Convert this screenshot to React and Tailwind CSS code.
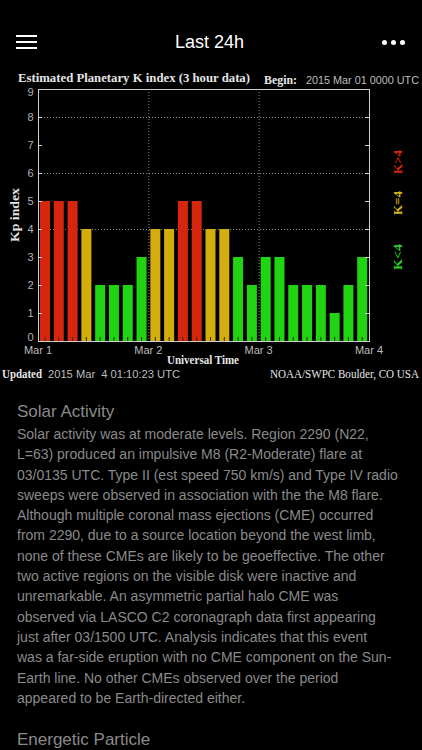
import React from 'react';

const KP = [5, 5, 5, 4, 2, 2, 2, 3, 4, 4, 5, 5, 4, 4, 3, 2, 3, 3, 2, 2, 2, 1, 2, 3];

const X0 = 38;
const X1 = 369;
const Y0 = 341; // Kp = 0
const UNIT = 28;
const SLOT = (X1 - X0) / 24;

function barColor(v) {
  if (v > 4) return '#d6260e';
  if (v === 4) return '#d4ad0d';
  return '#20d412';
}

// keep end labels inside the box, like the source plot does
function labelY(v) {
  if (v === 0) return Y0;
  if (v === 9) return Y0 - 9 * UNIT + 7;
  return Y0 - v * UNIT + 4;
}

const LINES = [
  'Solar activity was at moderate levels. Region 2290 (N22,',
  'L=63) produced an impulsive M8 (R2-Moderate) flare at',
  '03/0135 UTC. Type II (est speed 750 km/s) and Type IV radio',
  'sweeps were observed in association with the the M8 flare.',
  'Although multiple coronal mass ejections (CME) occurred',
  'from 2290, due to a source location beyond the west limb,',
  'none of these CMEs are likely to be geoeffective. The other',
  'two active regions on the visible disk were inactive and',
  'unremarkable. An asymmetric partial halo CME was',
  'observed via LASCO C2 coronagraph data first appearing',
  'just after 03/1500 UTC. Analysis indicates that this event',
  'was a far-side eruption with no CME component on the Sun-',
  'Earth line. No other CMEs observed over the period',
  'appeared to be Earth-directed either.',
];

function KpChart() {
  const serif = '"Liberation Serif", "DejaVu Serif", serif';
  const sans = '"Liberation Sans", Arial, sans-serif';
  const days = [
    { x: X0, label: 'Mar 1' },
    { x: X0 + SLOT * 8, label: 'Mar 2' },
    { x: X0 + SLOT * 16, label: 'Mar 3' },
    { x: X1, label: 'Mar 4' },
  ];

  return (
    <svg width="422" height="322" viewBox="0 64 422 322" className="block">
      {/* header */}
      <text x="18" y="82" fill="#e6e6e6" fontFamily={serif} fontWeight="bold" fontSize="12" textLength="232" lengthAdjust="spacingAndGlyphs">
        Estimated Planetary K index (3 hour data)
      </text>
      <text x="264" y="84" fill="#e6e6e6" fontFamily={serif} fontWeight="bold" fontSize="12" textLength="33" lengthAdjust="spacingAndGlyphs">
        Begin:
      </text>
      <text x="306" y="84" fill="#bdbdbd" fontFamily={sans} fontSize="11.5" textLength="113" lengthAdjust="spacingAndGlyphs">
        2015 Mar 01 0000 UTC
      </text>

      {/* dotted grid */}
      {[4, 6, 8].map((v) => (
        <line key={v} x1={X0} x2={X1} y1={Y0 - v * UNIT + 0.5} y2={Y0 - v * UNIT + 0.5} stroke="#8a8a8a" strokeWidth="1" strokeDasharray="1 2" />
      ))}
      {[days[1].x, days[2].x].map((x) => (
        <line key={x} x1={x + 0.5} x2={x + 0.5} y1={Y0 - 9 * UNIT} y2={Y0} stroke="#8a8a8a" strokeWidth="1" strokeDasharray="1 2" />
      ))}

      {/* bars */}
      {KP.map((v, i) => {
        const x = X0 + 2 + i * SLOT;
        const cx = x + 5;
        return (
          <g key={i}>
            <rect x={x} y={Y0 - v * UNIT} width="10" height={v * UNIT} fill={barColor(v)} />
            <line x1={cx} x2={cx} y1={Y0 - 4} y2={Y0} stroke="#3a2a10" strokeWidth="1" />
          </g>
        );
      })}

      {/* axes box */}
      <rect x={X0 + 0.5} y={Y0 - 9 * UNIT + 0.5} width={X1 - X0} height={9 * UNIT} fill="none" stroke="#d0d0d0" strokeWidth="1" />
      {Array.from({ length: 9 }, (_, i) => i + 1).map((v) => (
        <g key={v}>
          <line x1={X0} x2={X0 + 4} y1={Y0 - v * UNIT + 0.5} y2={Y0 - v * UNIT + 0.5} stroke="#d0d0d0" />
          <line x1={X1 - 4} x2={X1} y1={Y0 - v * UNIT + 0.5} y2={Y0 - v * UNIT + 0.5} stroke="#d0d0d0" />
        </g>
      ))}

      {/* y labels */}
      {Array.from({ length: 10 }, (_, v) => (
        <text key={v} x="30.5" y={labelY(v)} textAnchor="middle" fill="#b4b4b4" fontFamily={sans} fontSize="11">
          {v}
        </text>
      ))}
      <text transform="translate(19 215) rotate(-90)" textAnchor="middle" fill="#e6e6e6" fontFamily={serif} fontWeight="bold" fontSize="12.5" textLength="54" lengthAdjust="spacingAndGlyphs">
        Kp index
      </text>

      {/* x labels */}
      {days.map((d) => (
        <text key={d.label} x={d.x} y="354" textAnchor="middle" fill="#bdbdbd" fontFamily={sans} fontSize="11">
          {d.label}
        </text>
      ))}
      <text x="203" y="364" textAnchor="middle" fill="#e6e6e6" fontFamily={serif} fontWeight="bold" fontSize="12" textLength="72" lengthAdjust="spacingAndGlyphs">
        Universal Time
      </text>

      {/* legend */}
      <text transform="translate(402 162) rotate(-90)" textAnchor="middle" fill="#d6260e" fontFamily={serif} fontWeight="bold" fontSize="12.5" textLength="24" lengthAdjust="spacingAndGlyphs">
        K&gt;4
      </text>
      <text transform="translate(402 203) rotate(-90)" textAnchor="middle" fill="#d4b21a" fontFamily={serif} fontWeight="bold" fontSize="12.5" textLength="24" lengthAdjust="spacingAndGlyphs">
        K=4
      </text>
      <text transform="translate(402 257) rotate(-90)" textAnchor="middle" fill="#2fcf2a" fontFamily={serif} fontWeight="bold" fontSize="12.5" textLength="26" lengthAdjust="spacingAndGlyphs">
        K&lt;4
      </text>

      {/* footer */}
      <text x="2" y="378" fill="#e6e6e6" fontFamily={serif} fontWeight="bold" fontSize="12" textLength="40" lengthAdjust="spacingAndGlyphs">
        Updated
      </text>
      <text x="48" y="378" fill="#bdbdbd" fontFamily={sans} fontSize="11.5" textLength="132" lengthAdjust="spacingAndGlyphs" xmlSpace="preserve">
        2015 Mar  4 01:10:23 UTC
      </text>
      <text x="270" y="378" fill="#e6e6e6" fontFamily={serif} fontSize="12" textLength="149" lengthAdjust="spacingAndGlyphs">
        NOAA/SWPC Boulder, CO USA
      </text>
    </svg>
  );
}

export default function App() {
  return (
    <div className="w-[422px] h-[750px] overflow-hidden bg-black font-['Liberation_Sans',Arial,sans-serif]">
      {/* Nav bar */}
      <div className="h-16 pt-5 px-4 flex items-center justify-between">
        <button className="w-[21px] flex flex-col gap-[4px]" aria-label="Menu">
          <span className="block h-[2px] bg-white" />
          <span className="block h-[2px] bg-white" />
          <span className="block h-[2px] bg-white" />
        </button>
        <h1 className="text-[18px] text-white leading-none">Last 24h</h1>
        <div className="flex gap-[4px] pr-[1px]">
          <span className="block w-[5px] h-[5px] rounded-full bg-white" />
          <span className="block w-[5px] h-[5px] rounded-full bg-white" />
          <span className="block w-[5px] h-[5px] rounded-full bg-white" />
        </div>
      </div>

      <KpChart />

      {/* Report */}
      <div className="px-[17px] pt-[13px] text-[#8a8a8a]">
        <h2 className="text-[17px] leading-[25px]">Solar Activity</h2>
        <p className="text-[14px] leading-[20.3px]">
          {LINES.map((l, i) => (
            <span key={i} className="block whitespace-nowrap">{l}</span>
          ))}
        </p>
        <h2 className="mt-5 text-[17px] leading-[24px]">Energetic Particle</h2>
      </div>
    </div>
  );
}
